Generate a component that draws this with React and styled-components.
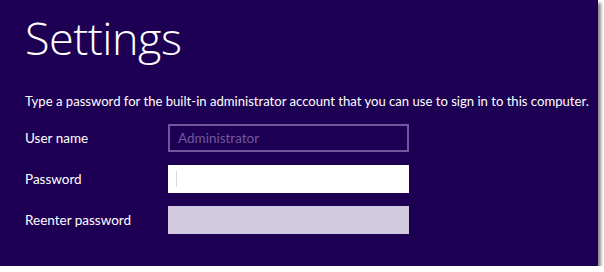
import React from 'react';
import styled, { createGlobalStyle } from 'styled-components';

const GlobalStyle = createGlobalStyle`
  html, body {
    margin: 0;
    padding: 0;
    background: #fff;
  }
  * { box-sizing: border-box; }
`;

const Panel = styled.div`
  width: 598px;
  height: 266px;
  background: #1d0054;
  color: #fff;
  font-family: Lato, "Open Sans", sans-serif;
  padding: 10px 0 0 25px;
  box-shadow: 3px 3px 3px rgba(0, 0, 0, 0.45);
`;

const Title = styled.h1`
  margin: 0;
  font-family: "Open Sans", sans-serif;
  font-weight: 300;
  font-size: 45px;
  line-height: 56px;
  letter-spacing: -0.5px;
`;

const Intro = styled.p`
  margin: 26px 0 0;
  font-size: 13.1px;
  line-height: 18px;
  white-space: nowrap;
`;

const Form = styled.div`
  display: grid;
  grid-template-columns: 143px 241px;
  row-gap: 13px;
  margin-top: 14px;
  align-items: center;
`;

const Label = styled.span`
  font-size: 13.5px;
`;

const Field = styled.div`
  height: 28px;
  padding: 0 8px;
  display: flex;
  align-items: center;
  font-size: 13.5px;
  color: #6f5a9c;
  background: ${p => p.$variant === 'white' ? '#fff' : p.$variant === 'dim' ? '#d1cadf' : 'transparent'};
  border: ${p => p.$variant === 'outline' ? '2px solid #6e5a9a' : 'none'};
`;

const Caret = styled.span`
  width: 1px;
  height: 16px;
  background: #d8d8d8;
`;

export default function App() {
  return (
    <>
      <GlobalStyle />
      <Panel>
        <Title>Settings</Title>
        <Intro>Type a password for the built-in administrator account that you can use to sign in to this computer.</Intro>
        <Form>
          <Label>User name</Label>
          <Field $variant="outline">Administrator</Field>
          <Label>Password</Label>
          <Field $variant="white"><Caret /></Field>
          <Label>Reenter password</Label>
          <Field $variant="dim" />
        </Form>
      </Panel>
    </>
  );
}
